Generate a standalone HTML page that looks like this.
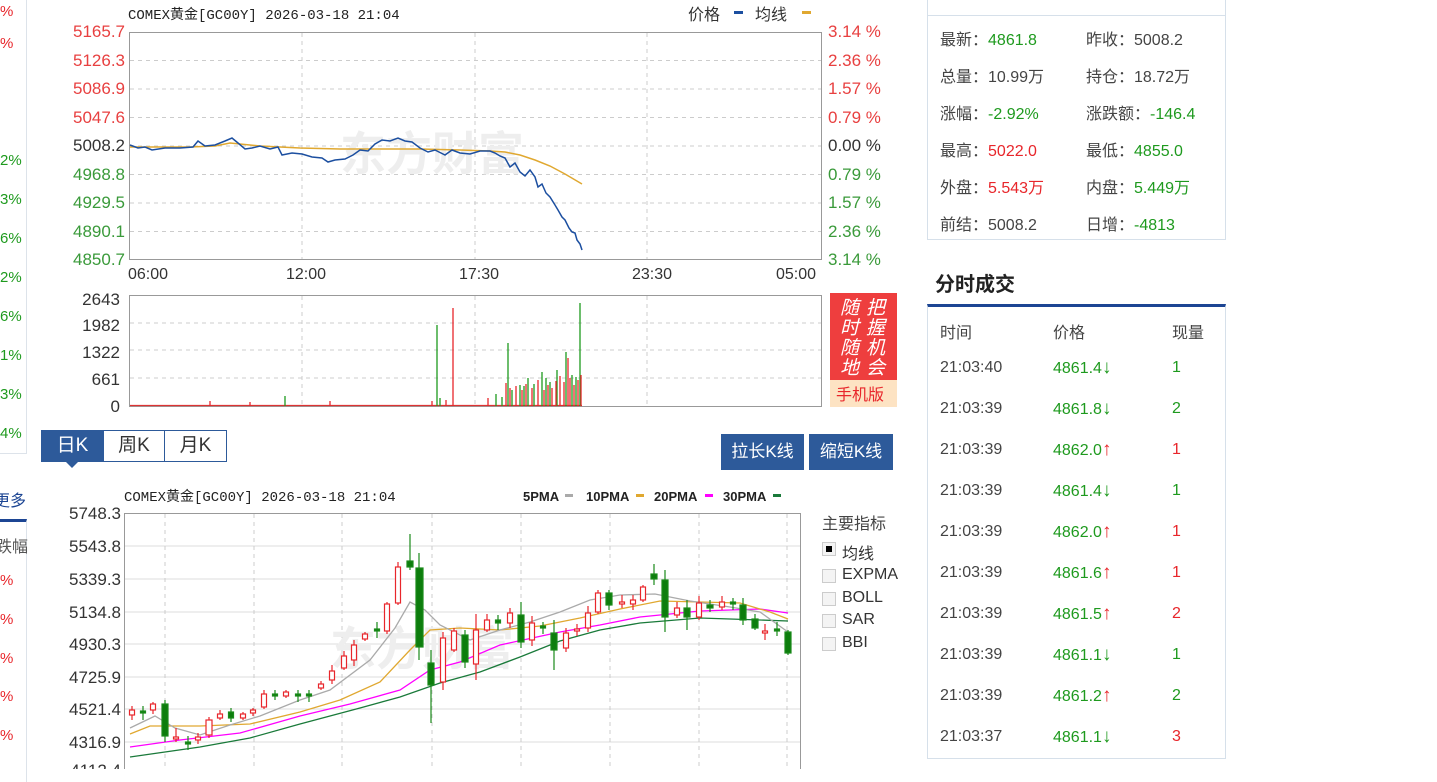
<!DOCTYPE html>
<html><head><meta charset="utf-8"><style>
body{margin:0;width:1437px;height:769px;overflow:hidden;background:#fff;font-family:"Liberation Sans","Noto Sans CJK SC",sans-serif;position:relative}
.a{position:absolute;white-space:nowrap}
.rp{font-size:16px;color:#444}
.r{color:#e8262b}.g{color:#1e9a1e}.k{color:#333}
.ar{font-size:19px;line-height:14px}
svg text{font-family:"Liberation Sans","Noto Sans CJK SC",sans-serif}
</style></head><body>
<!-- left strip -->
<div class="a" style="left:-2px;top:-2px;width:28px;height:455px;border-right:1px solid #dde3ea;border-bottom:1px solid #dde3ea"></div>
<div class="a" style="left:-2px;top:519px;width:28px;height:260px;border-right:1px solid #dde3ea;border-top:3px solid #1c4593"></div>
<div class="a r" style="left:0;top:3px;font-size:15px">%</div>
<div class="a r" style="left:0;top:35px;font-size:15px">%</div>
<div class="a g" style="left:0;top:152px;font-size:15px">2%</div>
<div class="a g" style="left:0;top:191px;font-size:15px">3%</div>
<div class="a g" style="left:0;top:230px;font-size:15px">6%</div>
<div class="a g" style="left:0;top:269px;font-size:15px">2%</div>
<div class="a g" style="left:0;top:308px;font-size:15px">6%</div>
<div class="a g" style="left:0;top:347px;font-size:15px">1%</div>
<div class="a g" style="left:0;top:386px;font-size:15px">3%</div>
<div class="a g" style="left:0;top:425px;font-size:15px">4%</div>
<div class="a" style="left:-6px;top:487px;font-size:16px;color:#1c4593">更多</div>
<div class="a" style="left:-4px;top:533px;font-size:16px;color:#555">跌幅</div>
<div class="a r" style="left:0;top:572px;font-size:15px">%</div>
<div class="a r" style="left:0;top:611px;font-size:15px">%</div>
<div class="a r" style="left:0;top:650px;font-size:15px">%</div>
<div class="a r" style="left:0;top:688px;font-size:15px">%</div>
<div class="a r" style="left:0;top:727px;font-size:15px">%</div>

<svg class="a" style="left:0;top:0" width="920" height="769">
<text x="128" y="19" font-size="14" fill="#222" style="font-family:'Liberation Mono','Noto Sans CJK SC',monospace">COMEX黄金[GC00Y] 2026-03-18 21:04</text>
<text x="688" y="20" font-size="16" fill="#333">价格</text><rect x="734" y="11" width="9" height="3" fill="#1c4fa0"/>
<text x="755" y="20" font-size="16" fill="#333">均线</text><rect x="802" y="11" width="9" height="3" fill="#e0a830"/>
<rect x="129.5" y="32.5" width="692" height="227" fill="none" stroke="#999"/>
<g stroke="#ccc" stroke-dasharray="4,4">
<line x1="130" x2="821" y1="60.5" y2="60.5"/><line x1="130" x2="821" y1="89" y2="89"/><line x1="130" x2="821" y1="117.5" y2="117.5"/><line x1="130" x2="821" y1="146" y2="146"/><line x1="130" x2="821" y1="174.5" y2="174.5"/><line x1="130" x2="821" y1="203" y2="203"/><line x1="130" x2="821" y1="231.5" y2="231.5"/>
<line x1="302" x2="302" y1="33" y2="259"/><line x1="475" x2="475" y1="33" y2="259"/><line x1="647" x2="647" y1="33" y2="259"/>
</g>
<text x="340" y="170" font-size="46" font-weight="bold" fill="#eee">东方财富</text>
<g font-size="17" text-anchor="end">
<text x="125" y="37" fill="#e84040">5165.7</text><text x="125" y="66" fill="#e84040">5126.3</text><text x="125" y="94" fill="#e84040">5086.9</text><text x="125" y="123" fill="#e84040">5047.6</text><text x="125" y="151" fill="#333">5008.2</text><text x="125" y="180" fill="#3a9a3a">4968.8</text><text x="125" y="208" fill="#3a9a3a">4929.5</text><text x="125" y="237" fill="#3a9a3a">4890.1</text><text x="125" y="265" fill="#3a9a3a">4850.7</text>
</g>
<g font-size="17">
<text x="828" y="37" fill="#e84040">3.14 %</text><text x="828" y="66" fill="#e84040">2.36 %</text><text x="828" y="94" fill="#e84040">1.57 %</text><text x="828" y="123" fill="#e84040">0.79 %</text><text x="828" y="151" fill="#333">0.00 %</text><text x="828" y="180" fill="#3a9a3a">0.79 %</text><text x="828" y="208" fill="#3a9a3a">1.57 %</text><text x="828" y="237" fill="#3a9a3a">2.36 %</text><text x="828" y="265" fill="#3a9a3a">3.14 %</text>
</g>
<g font-size="16" fill="#333"><text x="128" y="279">06:00</text><text x="286" y="279">12:00</text><text x="459" y="279">17:30</text><text x="632" y="279">23:30</text><text x="776" y="279">05:00</text></g>
<polyline fill="none" stroke="#e0a830" stroke-width="1.5" points="130,147 190,147 215,146 230,143 260,146 300,148 340,149 380,149 420,149 460,150 490,151 505,152 520,155 535,160 550,166 565,174 582,184"/>
<polyline fill="none" stroke="#1c4fa0" stroke-width="1.5" points="130,145 138,148 145,147 152,150 165,148 180,148 193,147 198,141 205,146 215,145 225,141 232,138 238,143 245,149 252,148 260,146 270,149 278,147 282,155 292,153 302,154 312,157 322,158 328,162 335,160 345,159 353,155 360,150 368,151 375,144 382,140 390,141 398,138 405,141 412,142 420,148 428,152 435,150 445,155 452,150 460,153 470,154 480,151 490,151 495,153 500,156 505,158 510,167 515,163 520,172 525,176 530,170 535,177 538,187 542,184 546,193 550,197 555,205 558,210 562,217 565,220 569,228 572,232 575,233 577,240 580,244 582,250"/>
<rect x="129.5" y="295.5" width="692" height="111" fill="none" stroke="#999"/>
<g stroke="#ccc" stroke-dasharray="4,4">
<line x1="130" x2="821" y1="323" y2="323"/><line x1="130" x2="821" y1="350" y2="350"/><line x1="130" x2="821" y1="378" y2="378"/>
<line x1="302" x2="302" y1="296" y2="406"/><line x1="475" x2="475" y1="296" y2="406"/><line x1="647" x2="647" y1="296" y2="406"/>
</g>
<g font-size="17" fill="#333" text-anchor="end"><text x="120" y="305">2643</text><text x="120" y="331">1982</text><text x="120" y="358">1322</text><text x="120" y="385">661</text><text x="120" y="412">0</text></g>
<g stroke-width="1.3">
<line x1="130" x2="582" y1="405.5" y2="405.5" stroke="#d33"/>
<g stroke="#1e9a1e"><path d="M437 406V325M508 406V343M580 406V303M542 406V372M520 406V385M528 406V378M534 406V384M557 406V370M566 406V352M572 406V375M512 406V390M550 406V382M440 406V398M285 406V396M496 406V394M502 406V397M576 406V377M546 406V378M524 406V386"/></g>
<g stroke="#e8262b"><path d="M453 406V308M506 406V383M510 406V388M516 406V386M522 406V390M526 406V384M532 406V388M538 406V380M544 406V390M548 406V385M552 406V388M556 406V381M560 406V376M564 406V382M568 406V358M570 406V378M574 406V385M578 406V380M581 406V375M446 406V400M432 406V401M210 406V401M250 406V402M330 406V401M488 406V398"/></g>
</g>
<rect x="830" y="293" width="67" height="87" fill="#ee3e3e"/>
<rect x="830" y="380" width="67" height="27" fill="#fde3c3"/>
<g font-size="19" fill="#fff" font-style="italic"><text x="840" y="314">随</text><text x="840" y="334">时</text><text x="840" y="354">随</text><text x="840" y="374">地</text><text x="866" y="314">把</text><text x="866" y="334">握</text><text x="866" y="354">机</text><text x="866" y="374">会</text></g>
<text x="836" y="400" font-size="16" fill="#e8262b">手机版</text>

<text x="124" y="501" font-size="14" fill="#222" style="font-family:'Liberation Mono','Noto Sans CJK SC',monospace">COMEX黄金[GC00Y] 2026-03-18 21:04</text>
<g font-size="13" fill="#222" font-weight="bold">
<text x="523" y="501">5PMA</text><rect x="565" y="494" width="8" height="3" fill="#aaa"/>
<text x="586" y="501">10PMA</text><rect x="636" y="494" width="8" height="3" fill="#e0a830"/>
<text x="654" y="501">20PMA</text><rect x="705" y="494" width="8" height="3" fill="#f0f"/>
<text x="723" y="501">30PMA</text><rect x="773" y="494" width="8" height="3" fill="#1a7a3a"/>
</g>
<path d="M124.5 769V513.5H800.5V769" fill="none" stroke="#999"/>
<g stroke="#ddd"><line x1="125" x2="800" y1="546" y2="546"/><line x1="125" x2="800" y1="579" y2="579"/><line x1="125" x2="800" y1="612" y2="612"/><line x1="125" x2="800" y1="644" y2="644"/><line x1="125" x2="800" y1="677" y2="677"/><line x1="125" x2="800" y1="709" y2="709"/><line x1="125" x2="800" y1="742" y2="742"/></g>
<g stroke="#ccc" stroke-dasharray="4,4"><line x1="165" x2="165" y1="514" y2="769"/><line x1="254" x2="254" y1="514" y2="769"/><line x1="342" x2="342" y1="514" y2="769"/><line x1="432" x2="432" y1="514" y2="769"/><line x1="521" x2="521" y1="514" y2="769"/><line x1="610" x2="610" y1="514" y2="769"/><line x1="699" x2="699" y1="514" y2="769"/><line x1="787" x2="787" y1="514" y2="769"/></g>
<text x="330" y="665" font-size="46" font-weight="bold" fill="#eee">东方财富</text>
<g font-size="17" fill="#333" text-anchor="end"><text x="121" y="519">5748.3</text><text x="121" y="552">5543.8</text><text x="121" y="585">5339.3</text><text x="121" y="618">5134.8</text><text x="121" y="650">4930.3</text><text x="121" y="683">4725.9</text><text x="121" y="715">4521.4</text><text x="121" y="748">4316.9</text><text x="121" y="776">4112.4</text></g>
<polyline fill="none" stroke="#1a7a3a" stroke-width="1.3" points="130,757 200,747 250,738 300,724 360,708 400,697 440,683 480,672 520,657 560,641 600,630 640,623 700,618 760,620 788,621"/>
<polyline fill="none" stroke="#f0f" stroke-width="1.3" points="130,747 180,740 240,733 300,716 350,704 400,690 430,670 460,662 500,645 560,632 600,625 640,617 700,611 760,609 788,613"/>
<polyline fill="none" stroke="#e0a830" stroke-width="1.3" points="130,734 150,726 200,726 250,724 300,712 340,700 380,682 410,650 430,630 460,628 500,630 540,626 580,618 620,609 660,601 700,602 740,603 770,612 788,619"/>
<polyline fill="none" stroke="#aaa" stroke-width="1.3" points="130,728 155,716 175,728 200,735 230,725 260,716 300,700 330,690 370,660 395,628 410,602 425,610 440,625 470,640 500,630 530,622 560,612 590,600 620,595 655,594 690,601 730,607 760,612 788,632"/>
<g stroke="#e8262b" fill="#fff" stroke-width="1.2">
<path d="M132 706V720M153 702V714M176 728V742M198 733V744M209 717V738M220 710V720M243 712V720M253 708V716M264 690V709M286 690V698M321 681V690M332 665V684M344 651V670M354 640V666M365 632V641M387 602V634M398 562V605M443 632V690M454 628V652M476 614V680M487 614V632M510 608V628M532 616V646M566 628V652M577 624V636M588 606V632M598 590V614M622 595V608M633 595V610M643 585V602M677 602V618M699 596V620M722 596V610M765 624V640"/>
<rect x="129.5" y="710" width="5" height="5"/><rect x="150.5" y="704" width="5" height="6"/><rect x="173.5" y="737" width="5" height="2"/><rect x="195.5" y="737" width="5" height="3"/><rect x="206" y="720" width="6" height="15"/><rect x="217.5" y="714" width="5" height="4"/><rect x="240.5" y="714" width="5" height="4"/><rect x="250.5" y="710" width="5" height="3"/><rect x="261.5" y="694" width="5" height="13"/><rect x="283.5" y="692" width="5" height="4"/><rect x="318.5" y="684" width="5" height="4"/><rect x="329.5" y="671" width="5" height="9"/><rect x="341.5" y="656" width="5" height="12"/><rect x="351.5" y="645" width="5" height="15"/><rect x="362.5" y="634" width="5" height="5"/><rect x="384.5" y="604" width="5" height="27"/><rect x="395.5" y="567" width="5" height="36"/><rect x="440.5" y="638" width="5" height="44"/><rect x="451.5" y="631" width="5" height="19"/><rect x="473.5" y="630" width="5" height="34"/><rect x="484.5" y="620" width="5" height="10"/><rect x="507.5" y="613" width="5" height="10"/><rect x="529.5" y="623" width="5" height="17"/><rect x="563.5" y="633" width="5" height="15"/><rect x="574.5" y="629" width="5" height="2"/><rect x="585.5" y="613" width="5" height="15"/><rect x="595.5" y="593" width="5" height="19"/><rect x="619.5" y="602" width="5" height="2"/><rect x="630.5" y="600" width="5" height="4"/><rect x="640.5" y="587" width="5" height="13"/><rect x="674.5" y="608" width="5" height="7"/><rect x="696.5" y="603" width="5" height="14"/><rect x="719.5" y="602" width="5" height="5"/><rect x="762.5" y="631" width="5" height="2"/>
</g>
<g stroke="#1a8a1a" fill="#0d7d0d" stroke-width="1.2">
<path d="M143 706V720M165 700V742M188 736V750M231 708V722M275 690V700M298 690V702M309 690V702M377 622V638M410 534V570M419 553V660M431 650V723M465 630V668M498 615V630M521 602V648M543 622V634M554 620V670M609 590V610M654 564V585M665 570V632M687 600V630M710 600V612M733 598V610M743 598V625M755 614V630M777 622V636M788 630V655"/>
<rect x="162" y="704" width="6" height="32"/><rect x="140.5" y="711" width="5" height="2"/><rect x="185.5" y="742" width="5" height="2"/><rect x="228.5" y="712" width="5" height="6"/><rect x="272.5" y="694" width="5" height="2"/><rect x="295.5" y="694" width="5" height="2"/><rect x="306.5" y="694" width="5" height="2"/><rect x="374.5" y="629" width="5" height="2"/><rect x="407" y="561" width="6" height="6"/><rect x="416" y="568" width="7" height="79"/><rect x="428" y="663" width="6" height="22"/><rect x="462" y="635" width="6" height="27"/><rect x="495.5" y="620" width="5" height="3"/><rect x="518" y="615" width="6" height="27"/><rect x="540.5" y="626" width="5" height="2"/><rect x="551" y="633" width="6" height="17"/><rect x="606" y="593" width="6" height="12"/><rect x="651" y="574" width="6" height="5"/><rect x="662" y="580" width="6" height="37"/><rect x="684" y="608" width="6" height="9"/><rect x="707" y="605" width="6" height="3"/><rect x="730.5" y="602" width="5" height="2"/><rect x="740" y="605" width="6" height="15"/><rect x="752" y="619" width="6" height="9"/><rect x="774.5" y="629" width="5" height="2"/><rect x="785" y="632" width="6" height="21"/>
</g>
</svg>

<div class="a" style="left:41px;top:430px;width:186px;height:32px;border:1px solid #2d5a9a;box-sizing:border-box"></div>
<div class="a" style="left:41px;top:430px;width:63px;height:32px;background:#2d5a9a;color:#fff;font-size:19px;text-align:center;line-height:31px">日K</div>
<div class="a" style="left:66px;top:462px;width:0;height:0;border-left:6px solid transparent;border-right:6px solid transparent;border-top:6px solid #2d5a9a"></div>
<div class="a" style="left:104px;top:430px;width:60px;height:31px;border-right:1px solid #2d5a9a;font-size:19px;color:#333;text-align:center;line-height:31px">周K</div>
<div class="a" style="left:165px;top:430px;width:61px;height:31px;font-size:19px;color:#333;text-align:center;line-height:31px">月K</div>
<div class="a" style="left:721px;top:434px;width:83px;height:36px;background:#2d5a9a;color:#fff;font-size:17px;text-align:center;line-height:36px">拉长K线</div>
<div class="a" style="left:809px;top:434px;width:84px;height:36px;background:#2d5a9a;color:#fff;font-size:17px;text-align:center;line-height:36px">缩短K线</div>
<div class="a" style="left:822px;top:510px;font-size:16px;color:#444">主要指标</div>
<div class="a" style="left:822px;top:542px;width:12px;height:12px;border:1px solid #ccc;background:#f4f4f4"><div style="margin:3px;width:6px;height:6px;background:#000"></div></div>
<div class="a" style="left:842px;top:540px;font-size:16px;color:#333">均线</div>
<div class="a" style="left:822px;top:569px;width:12px;height:12px;border:1px solid #ccc;background:#f4f4f4"></div><div class="a" style="left:842px;top:566px;font-size:16px;color:#333">EXPMA</div>
<div class="a" style="left:822px;top:592px;width:12px;height:12px;border:1px solid #ccc;background:#f4f4f4"></div><div class="a" style="left:842px;top:589px;font-size:16px;color:#333">BOLL</div>
<div class="a" style="left:822px;top:614px;width:12px;height:12px;border:1px solid #ccc;background:#f4f4f4"></div><div class="a" style="left:842px;top:611px;font-size:16px;color:#333">SAR</div>
<div class="a" style="left:822px;top:637px;width:12px;height:12px;border:1px solid #ccc;background:#f4f4f4"></div><div class="a" style="left:842px;top:634px;font-size:16px;color:#333">BBI</div>

<div class="a" style="left:927px;top:-2px;width:299px;height:242px;border:1px solid #d6e0ea;box-sizing:border-box"></div>
<div class="a" style="left:927px;top:15px;width:299px;height:1px;background:#d6e0ea"></div>
<div class="a rp" style="left:940px;top:26px">最新：<span class="g">4861.8</span></div><div class="a rp" style="left:1086px;top:26px">昨收：5008.2</div>
<div class="a rp" style="left:940px;top:63px">总量：10.99万</div><div class="a rp" style="left:1086px;top:63px">持仓：18.72万</div>
<div class="a rp" style="left:940px;top:100px">涨幅：<span class="g">-2.92%</span></div><div class="a rp" style="left:1086px;top:100px">涨跌额：<span class="g">-146.4</span></div>
<div class="a rp" style="left:940px;top:137px">最高：<span class="r">5022.0</span></div><div class="a rp" style="left:1086px;top:137px">最低：<span class="g">4855.0</span></div>
<div class="a rp" style="left:940px;top:174px">外盘：<span class="r">5.543万</span></div><div class="a rp" style="left:1086px;top:174px">内盘：<span class="g">5.449万</span></div>
<div class="a rp" style="left:940px;top:211px">前结：5008.2</div><div class="a rp" style="left:1086px;top:211px">日增：<span class="g">-4813</span></div>
<div class="a" style="left:935px;top:268px;font-size:20px;font-weight:bold;color:#222">分时成交</div>
<div class="a" style="left:927px;top:304px;width:299px;height:455px;border:1px solid #d6e0ea;border-top:3px solid #1c4593;box-sizing:border-box"></div>
<div class="a rp" style="left:940px;top:319px">时间</div><div class="a rp" style="left:1053px;top:319px">价格</div><div class="a rp" style="left:1172px;top:319px">现量</div>
<div class="a rp" style="left:940px;top:359px">21:03:40</div><div class="a rp g" style="left:1053px;top:360px">4861.4<span class="ar">↓</span></div><div class="a rp g" style="left:1172px;top:359px">1</div>
<div class="a rp" style="left:940px;top:400px">21:03:39</div><div class="a rp g" style="left:1053px;top:401px">4861.8<span class="ar">↓</span></div><div class="a rp g" style="left:1172px;top:400px">2</div>
<div class="a rp" style="left:940px;top:441px">21:03:39</div><div class="a rp g" style="left:1053px;top:442px">4862.0<span class="r ar">↑</span></div><div class="a rp r" style="left:1172px;top:441px">1</div>
<div class="a rp" style="left:940px;top:482px">21:03:39</div><div class="a rp g" style="left:1053px;top:483px">4861.4<span class="ar">↓</span></div><div class="a rp g" style="left:1172px;top:482px">1</div>
<div class="a rp" style="left:940px;top:523px">21:03:39</div><div class="a rp g" style="left:1053px;top:524px">4862.0<span class="r ar">↑</span></div><div class="a rp r" style="left:1172px;top:523px">1</div>
<div class="a rp" style="left:940px;top:564px">21:03:39</div><div class="a rp g" style="left:1053px;top:565px">4861.6<span class="r ar">↑</span></div><div class="a rp r" style="left:1172px;top:564px">1</div>
<div class="a rp" style="left:940px;top:605px">21:03:39</div><div class="a rp g" style="left:1053px;top:606px">4861.5<span class="r ar">↑</span></div><div class="a rp r" style="left:1172px;top:605px">2</div>
<div class="a rp" style="left:940px;top:646px">21:03:39</div><div class="a rp g" style="left:1053px;top:647px">4861.1<span class="ar">↓</span></div><div class="a rp g" style="left:1172px;top:646px">1</div>
<div class="a rp" style="left:940px;top:687px">21:03:39</div><div class="a rp g" style="left:1053px;top:688px">4861.2<span class="r ar">↑</span></div><div class="a rp g" style="left:1172px;top:687px">2</div>
<div class="a rp" style="left:940px;top:728px">21:03:37</div><div class="a rp g" style="left:1053px;top:729px">4861.1<span class="ar">↓</span></div><div class="a rp r" style="left:1172px;top:728px">3</div>
</body></html>
